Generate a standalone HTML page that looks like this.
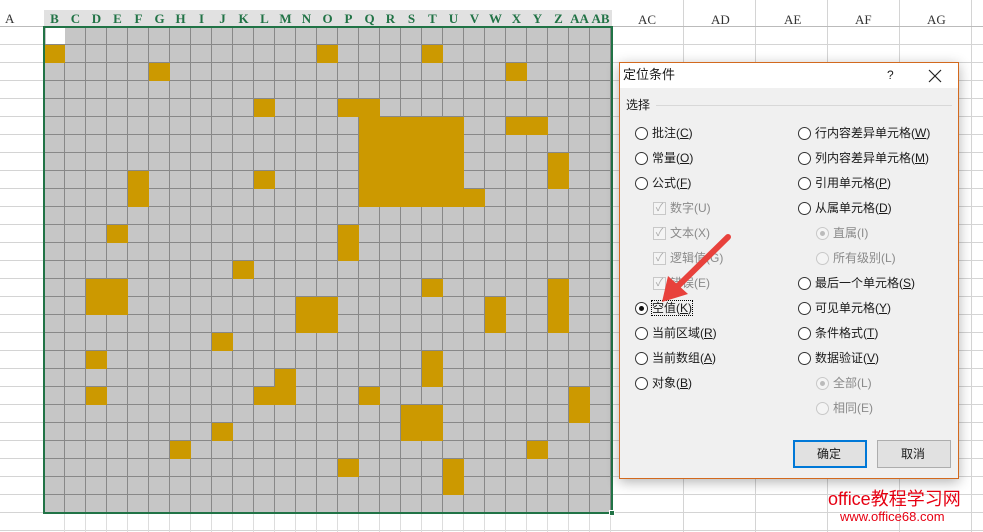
<!DOCTYPE html>
<html><head><meta charset="utf-8"><style>
*{margin:0;padding:0;box-sizing:border-box}
body{width:983px;height:532px;overflow:hidden;background:#fff;position:relative;font-family:"Liberation Sans","Noto Sans CJK SC",sans-serif}
.abs{position:absolute}
.hdr{position:absolute;top:10px;height:17px;font:bold 13px "Liberation Serif",serif;color:#217346;text-align:center;line-height:17px}
.o{position:absolute;width:21px;height:18px;background:#cc9900}
.dlg{position:absolute;left:619px;top:62px;width:340px;height:417px;background:#f0f0f0;border:1px solid #d2691e;box-shadow:0 3px 12px rgba(0,0,0,.3)}
.t{position:absolute;font-size:12px;color:#1a1a1a;white-space:nowrap;line-height:14px}
.g{color:#8a8a8a}
.r{position:absolute;width:13px;height:13px;border:1px solid #333;border-radius:50%;background:#fff}
.rg{border-color:#c8c8c8;background:#f4f4f4}
.cb{position:absolute;width:13px;height:13px;border:1px solid #c8c8c8;background:#f4f4f4;color:#aaa;font-size:11px;line-height:11px;text-align:center}
u{text-decoration:underline}
</style></head><body>
<div class="abs" style="left:0;top:27px;width:983px;height:505px;background-image:repeating-linear-gradient(to bottom,transparent 0 17px,#d4d4d4 17px 18px)"></div>
<div class="abs" style="left:612px;top:0;width:371px;height:532px;background-image:repeating-linear-gradient(to right,transparent 0 71px,#d4d4d4 71px 72px)"></div>
<div class="abs" style="left:0;top:26px;width:983px;height:1px;background:#bbb"></div>
<div class="abs" style="left:44px;top:513px;width:568px;height:19px;background-image:repeating-linear-gradient(to right,transparent 0 20px,#ddd 20px 21px)"></div>
<div class="abs" style="left:5px;top:11px;font:13px 'Liberation Serif',serif;color:#333">A</div>
<div class="abs" style="left:44px;top:10px;width:568px;height:17px;background:#e1e1e1"></div>
<div style="font:13px 'Liberation Serif',serif;color:#333">
<div class="abs" style="left:638px;top:12px">AC</div><div class="abs" style="left:711px;top:12px">AD</div><div class="abs" style="left:784px;top:12px">AE</div><div class="abs" style="left:855px;top:12px">AF</div><div class="abs" style="left:927px;top:12px">AG</div></div>
<div id="hd"></div>
<div class="abs" style="left:44px;top:27px;width:568px;height:486px;background-color:#c6c6c6;background-image:repeating-linear-gradient(to right,transparent 0 20px,#888 20px 21px),repeating-linear-gradient(to bottom,transparent 0 17px,#888 17px 18px)"></div>
<div class="abs" style="left:46px;top:28px;width:19px;height:16px;background:#fff"></div>
<div id="cells"></div>
<div class="abs" style="left:43px;top:26px;width:570px;height:488px;border:2px solid #217346"></div>
<div class="abs" style="left:609px;top:510px;width:6px;height:6px;background:#217346;border:1px solid #fff"></div>

<div class="dlg">
<div class="abs" style="left:0;top:0;width:338px;height:25px;background:#fff"></div>
<div class="t" style="left:3px;top:5px;font-size:13px">定位条件</div>
<div class="t" style="left:267px;top:5px">?</div>
<svg class="abs" style="left:308px;top:6px" width="14" height="14"><path d="M1 1L13 13M13 1L1 13" stroke="#222" stroke-width="1.2"/></svg>
<div class="t" style="left:6px;top:35px">选择</div>
<div class="abs" style="left:36px;top:42px;width:296px;height:1px;background:#d8d8d8"></div>
<div id="opts"></div>
<div class="abs" style="left:173px;top:377px;width:74px;height:28px;border:2px solid #0078d7;background:#e1e1e1"></div>
<div class="t" style="left:197px;top:384px">确定</div>
<div class="abs" style="left:257px;top:377px;width:74px;height:28px;border:1px solid #adadad;background:#e1e1e1"></div>
<div class="t" style="left:281px;top:384px">取消</div>
</div>
<svg class="abs" style="left:0;top:0" width="983" height="532"><line x1="728" y1="237" x2="676" y2="288" stroke="#e8413c" stroke-width="6" stroke-linecap="round"/><polygon points="662,302 668,276 688,294" fill="#e8413c"/></svg>
<div class="abs" style="left:828px;top:485px;font-size:18px;color:#e60012">office教程学习网</div>
<div class="abs" style="left:840px;top:509px;font-size:13px;color:#e60012">www.office68.com</div>
<script>
var L="B C D E F G H I J K L M N O P Q R S T U V W X Y Z AA AB".split(" "),h="";
L.forEach(function(l,i){h+='<div class="hdr" style="left:'+(44+i*21)+'px;width:21px">'+l+'</div>'});
document.getElementById("hd").innerHTML=h;
var C={1:[0,13,18],2:[5,22],4:[10,14,15],5:[15,16,17,18,19,22,23],6:[15,16,17,18,19],7:[15,16,17,18,19,24],8:[4,10,15,16,17,18,19,24],9:[4,15,16,17,18,19,20],11:[3,14],12:[14],13:[9],14:[2,3,18,24],15:[2,3,12,13,21,24],16:[12,13,21,24],17:[8],18:[2,18],19:[11,18],20:[2,10,11,15,25],21:[17,18,25],22:[8,17,18],23:[6,23],24:[14,19],25:[19]};
h="";for(var r in C)C[r].forEach(function(c){h+='<div class="o" style="left:'+(44+c*21)+'px;top:'+(27+r*18)+'px"></div>'});
document.getElementById("cells").innerHTML=h;
var O=[[0,"批注(<u>C</u>)",1],[1,"常量(<u>O</u>)",1],[2,"公式(<u>F</u>)",1],[3,"数字(U)",2],[4,"文本(X)",2],[5,"逻辑值(G)",2],[6,"错误(E)",2],[7,"空值(<u>K</u>)",3],[8,"当前区域(<u>R</u>)",1],[9,"当前数组(<u>A</u>)",1],[10,"对象(<u>B</u>)",1]];
var R=[[0,"行内容差异单元格(<u>W</u>)",1],[1,"列内容差异单元格(<u>M</u>)",1],[2,"引用单元格(<u>P</u>)",1],[3,"从属单元格(<u>D</u>)",1],[4,"直属(I)",4],[5,"所有级别(L)",5],[6,"最后一个单元格(<u>S</u>)",1],[7,"可见单元格(<u>Y</u>)",1],[8,"条件格式(<u>T</u>)",1],[9,"数据验证(<u>V</u>)",1],[10,"全部(L)",4],[11,"相同(E)",5]];
h="";
function add(x,o){var y=63+o[0]*25,k=o[2];
if(k==2){h+='<div class="cb" style="left:'+(x+18)+'px;top:'+(y+1)+'px">✓</div><div class="t g" style="left:'+(x+35)+'px;top:'+y+'px">'+o[1]+'</div>';return}
if(k>=4){h+='<div class="r rg" style="left:'+(x+18)+'px;top:'+(y+1)+'px">'+(k==4?'<div style="position:absolute;left:3px;top:3px;width:5px;height:5px;border-radius:50%;background:#bbb"></div>':'')+'</div><div class="t g" style="left:'+(x+35)+'px;top:'+y+'px">'+o[1]+'</div>';return}
h+='<div class="r" style="left:'+x+'px;top:'+(y+1)+'px">'+(k==3?'<div style="position:absolute;left:3px;top:3px;width:5px;height:5px;border-radius:50%;background:#111"></div>':'')+'</div><div class="t" style="left:'+(x+17)+'px;top:'+y+'px;'+(k==3?'outline:1px dotted #000':'')+'">'+o[1]+'</div>'}
O.forEach(function(o){add(15,o)});R.forEach(function(o){add(178,o)});
document.getElementById("opts").innerHTML=h;
</script>
</body></html>
